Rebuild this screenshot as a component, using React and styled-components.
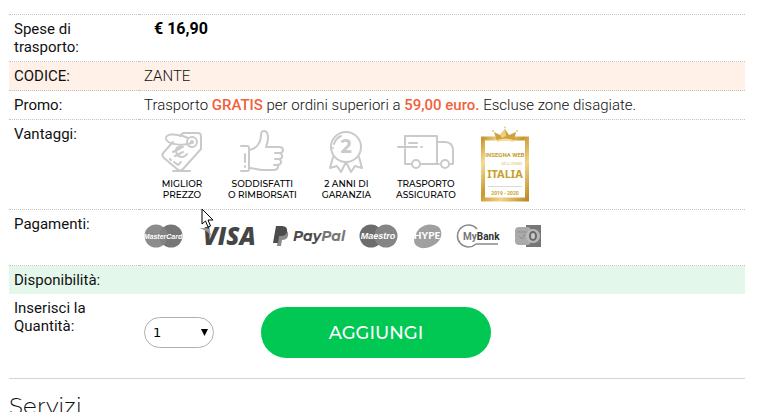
import React from 'react'
import styled, { createGlobalStyle } from 'styled-components'

const GlobalStyle = createGlobalStyle`
  :root {
    --Text-primary: #111;
    --Orange: #f4603a;
    --Light-orange: #fff0e8;
    --Light-green: #e3f8eb;
    --Green: #00c853;
    --Dotted: #c4c4c4;
    --Icon: #cacaca;
  }
  * {
    box-sizing: border-box;
  }
  html {
    overflow: hidden;
  }
  body {
    margin: 0;
    background: #fff;
    color: var(--Text-primary);
    font-family: Roboto, sans-serif;
    font-size: 15px;
    line-height: 18px;
  }
`
const Page = styled.main`
  position: relative;
  padding: 14px 18px 0 9px;
`
const Details = styled.table`
  width: 100%;
  border-collapse: collapse;
  border-spacing: 0;
`
const Row = styled.tr`
  background: ${({ tone }) => tone || 'transparent'};
`
const Label = styled.th`
  width: 130px;
  padding: 5px;
  border-top: ${({ plain }) => (plain ? '0' : '1px dotted var(--Dotted)')};
  font-weight: 400;
  text-align: left;
  vertical-align: top;
`
const Value = styled.td`
  padding: 5px;
  border-top: ${({ plain }) => (plain ? '0' : '1px dotted var(--Dotted)')};
  font-weight: 300;
  vertical-align: top;
`
const Price = styled.strong`
  padding-left: 10px;
  color: #000;
  font-size: 16px;
  font-weight: 700;
`
const Highlight = styled.strong`
  color: var(--Orange);
  font-weight: 500;
`
const Benefits = styled.ul`
  display: flex;
  align-items: flex-start;
  gap: 25px;
  margin: 0;
  padding: 1px 0 2px 17px;
  list-style: none;
`
const Benefit = styled.li`
  display: flex;
  flex-direction: column;
  align-items: center;
  gap: 4px;
  padding-top: 4px;
  color: #000;
  font-family: Montserrat, Inter, sans-serif;
  font-size: 9px;
  font-weight: 500;
  line-height: 11px;
  text-align: center;
  white-space: nowrap;
  svg {
    display: block;
    fill: none;
    stroke: var(--Icon);
    stroke-width: 2;
    stroke-linecap: round;
    stroke-linejoin: round;
  }
`
const Award = styled.li`
  svg {
    display: block;
  }
`
const Payments = styled.div`
  display: flex;
  align-items: center;
  gap: 15px;
  padding: 8px 0 11px;
  svg {
    display: block;
    overflow: visible;
  }
`
const CartForm = styled.form`
  display: flex;
  align-items: center;
  gap: 47px;
  padding: 8px 0 15px;
`
const SelectBox = styled.div`
  position: relative;
  svg {
    position: absolute;
    top: 12px;
    right: 6px;
    pointer-events: none;
  }
`
const Select = styled.select`
  display: block;
  width: 70px;
  height: 31px;
  padding: 0 8px;
  border: 1px solid #b5aeae;
  border-radius: 16px;
  background: #fff;
  color: #000;
  font-family: 'DejaVu Sans', sans-serif;
  font-size: 13px;
  appearance: none;
`
const AddButton = styled.button`
  width: 230px;
  height: 51px;
  border: 0;
  border-radius: 26px;
  background: var(--Green);
  color: #fff;
  font-family: Montserrat, Inter, sans-serif;
  font-size: 18px;
  font-weight: 500;
  cursor: pointer;
`
const Services = styled.section`
  border-top: 1px solid #d4d4d4;
  padding-top: 13px;
`
const Title = styled.h2`
  margin: 0;
  font-family: Montserrat, Inter, sans-serif;
  font-size: 23px;
  font-weight: 300;
  line-height: 28px;
`
const Pointer = styled.svg`
  position: absolute;
  top: 208px;
  left: 201px;
`

const TagIcon = () => (
  <svg width="42" height="44" viewBox="0 0 42 44" aria-hidden="true">
    <path d="M19 6 L22 3 L37 3 Q40 3 40 6 L40 19 L22 39 Q19 42 16 39 L3 28 Q0 25 3 22 L12 12" />
    <path d="M12 41 H29" />
    <circle cx="31" cy="12" r="5" />
    <circle cx="31" cy="12" r="1" />
    <path d="M31 13 C22 16 7 15 5 9 C4 3 15 4 22 6 L27 8" />
    <path d="M22 17 C17 15 13 19 16 24 C18 28 23 28 26 24 M12 22 L20 18 M14 26 L22 22" />
    <path d="M9 29 L10 30 M13 32 L17 35 L20 32" />
  </svg>
)

const ThumbIcon = () => (
  <svg width="44" height="44" viewBox="0 0 44 44" aria-hidden="true">
    <path d="M1 16 H7 Q9 16 9 18 V39 Q9 41 7 41 H1" />
    <path d="M5 24 V32 M5 36 V37" />
    <path d="M9 20 C17 19 21 12 21 5 Q21 1 24 1 Q28 1 28 8 C28 12 27 14 26 17 H39 Q43 17 43 20 Q43 23 39 23 H35 M39 23 Q43 24 42 27 Q42 29 38 29 H35 M39 29 Q42 31 41 33 Q40 35 37 35 H34 M37 35 Q39 37 37 39 Q36 40 33 40 H23 C17 40 15 38 9 38" />
  </svg>
)

const MedalIcon = () => (
  <svg width="36" height="44" viewBox="0 0 36 44" aria-hidden="true">
    <circle cx="18" cy="17" r="15" />
    <path d="M6 14 Q8 8 13 6 M5 18 V18" />
    <path d="M5 27 L2 38 L9 36 L13 42 L18 32 L23 42 L27 36 L34 38 L31 27" />
    <text x="18" y="23" textAnchor="middle" fontFamily="Montserrat, Lato, sans-serif" fontSize="19" fontWeight="700" fill="#cacaca" stroke="none">2</text>
  </svg>
)

const TruckIcon = () => (
  <svg width="58" height="44" viewBox="0 0 58 44" aria-hidden="true">
    <path d="M8 15 V6 H40 V34 H24 M14 34 H8 V19" />
    <path d="M40 12 H48 Q56 12 56 21 V34 H53 M42 34 H40" />
    <circle cx="19" cy="34" r="4" />
    <circle cx="48" cy="34" r="4" />
    <path d="M12 13 H20 M1 17 H20 M24 17 H25" />
  </svg>
)

const AwardBadge = () => (
  <svg width="48" height="76" viewBox="0 0 48 76" role="img" aria-label="Insegna Web dell'anno Italia">
    <defs>
      <linearGradient id="gold" x1="0" y1="0" x2="1" y2="1">
        <stop offset="0" stopColor="#c99a2e" />
        <stop offset="0.2" stopColor="#f3dd9a" />
        <stop offset="0.45" stopColor="#c8982f" />
        <stop offset="0.7" stopColor="#f0d488" />
        <stop offset="1" stopColor="#bd8c28" />
      </linearGradient>
    </defs>
    <rect x="2" y="12.500" width="44" height="61" fill="#fff" stroke="url(#gold)" strokeWidth="4" />
    <path d="M16 15 L13 6 L19 9 L24 3 L28 9 L35 6 L33 15 Q24 12 16 15 Z" fill="#d0a23a" />
    <path d="M19 9 L24 3 L25 10 L21 12 Z" fill="#ecd082" />
    <path d="M16 14 Q24 11 33 14 L32 16 Q24 13 16 16 Z" fill="#f1dc9c" />
    <circle cx="24" cy="1.500" r="1" fill="#e8cd7c" />
    <circle cx="12" cy="5" r="1" fill="#e8cd7c" />
    <circle cx="36" cy="5" r="1" fill="#e8cd7c" />
    <g fontFamily="'Noto Sans', sans-serif" fill="#c99f2c">
      <text x="24" y="31" textAnchor="middle" fontFamily="Roboto, sans-serif" fontSize="6" fontWeight="700">INSEGNA WEB</text>
      <text x="41" y="39" textAnchor="end" fontFamily="Roboto, sans-serif" fontSize="4">DELL’ANNO</text>
      <text x="24" y="52" textAnchor="middle" fontSize="11" fontWeight="700">ITALIA</text>
      <text x="24" y="69" textAnchor="middle" fontFamily="Roboto, sans-serif" fontSize="5" fontWeight="700">2019 - 2020</text>
    </g>
    <path d="M7 60.500 H41" stroke="#dedad0" />
  </svg>
)

const CircleCard = ({ name, size, left, right }) => (
  <svg width="39" height="24" viewBox="0 0 39 24" role="img" aria-label={name}>
    <circle cx="12" cy="12" r="11.500" fill={left} />
    <circle cx="27" cy="12" r="11.500" fill={right} />
    <path d="M19.500 3 A12 12 0 0 1 19.500 21 A12 12 0 0 1 19.500 3 Z" fill="#838383" />
    <text x="19" y="15" textAnchor="middle" fontFamily="'Liberation Sans', sans-serif" fontSize={size} fontWeight="700" fontStyle="italic" fill="#fff">{name}</text>
  </svg>
)

const VisaLogo = () => (
  <svg width="60" height="26" viewBox="0 0 60 26" role="img" aria-label="VISA">
    <text x="5" y="22" fontFamily="'Open Sans', sans-serif" fontSize="24" fontWeight="800" fontStyle="italic" fill="#454545">VISA</text>
    <path d="M1 5 H8 Q11 5 12 8 L13 13 Q9 7 1 5 Z" fill="#999" />
  </svg>
)

const PayPalLogo = () => (
  <svg width="71" height="24" viewBox="0 0 71 24" role="img" aria-label="PayPal">
    <path d="M6 6 H12 Q16 7 15 12 Q14 16 9 16 L8 22 H4 Z" fill="#8b8b8b" />
    <path d="M3 2 H9 Q15 2 14 8 Q13 12 8 12 H6 L5 19 H0 Z" fill="#4c4c4c" />
    <text x="20" y="17" fontFamily="Montserrat, Lato, sans-serif" fontSize="14" fontWeight="700" fontStyle="italic" fill="#4c4c4c">Pay<tspan fill="#777">Pal</tspan></text>
  </svg>
)

const HypeLogo = () => (
  <svg width="29" height="26" viewBox="0 0 29 26" role="img" aria-label="HYPE">
    <path d="M2 13 C5 4 13 0 21 2 C28 3 30 10 27 16 C24 22 15 26 8 25 C1 23 0 18 2 13 Z" fill="#a0a0a0" />
    <text x="14" y="16" textAnchor="middle" fontFamily="Lato, sans-serif" fontSize="10" fontWeight="900" fill="#fff">HYPE</text>
  </svg>
)

const MyBankLogo = () => (
  <svg width="43" height="26" viewBox="0 0 43 26" role="img" aria-label="MyBank">
    <path d="M20 6 A11 11 0 1 0 19 21 H41" fill="none" stroke="#8a8a8a" strokeWidth="1.500" />
    <text x="6" y="17" fontFamily="Roboto, sans-serif" fontSize="10" fontWeight="700" fill="#777">My<tspan fill="#333">Bank</tspan></text>
  </svg>
)

const CardsLogo = () => (
  <svg width="27" height="24" viewBox="0 0 27 24" aria-hidden="true">
    <rect x="11" y="1" width="15" height="22" fill="#777" />
    <rect x="0" y="3" width="16" height="18" rx="4" fill="#aaa" />
    <circle cx="18" cy="12" r="7" fill="#b9b9b9" />
    <ellipse cx="18" cy="12" rx="4" ry="5" fill="#686868" />
    <ellipse cx="18" cy="12" rx="2" ry="3" fill="#c9c9c9" />
    <path d="M2 8 H12 M4 12 L7 15 L10 10" fill="none" stroke="#8c8c8c" />
  </svg>
)

const App = () => {

  return (
    <Page>
      <GlobalStyle />
      <Details>
        <tbody>
          <Row>
            <Label scope="row">Spese di trasporto:</Label>
            <Value><Price>€ 16,90</Price></Value>
          </Row>
          <Row tone="var(--Light-orange)">
            <Label scope="row">CODICE:</Label>
            <Value>ZANTE</Value>
          </Row>
          <Row>
            <Label scope="row">Promo:</Label>
            <Value>
              Trasporto <Highlight>GRATIS</Highlight> per ordini superiori a <Highlight>59,00 euro.</Highlight> Escluse zone disagiate.
            </Value>
          </Row>
          <Row>
            <Label scope="row">Vantaggi:</Label>
            <Value>
              <Benefits>
                <Benefit><TagIcon /><span>MIGLIOR<br />PREZZO</span></Benefit>
                <Benefit><ThumbIcon /><span>SODDISFATTI<br />O RIMBORSATI</span></Benefit>
                <Benefit><MedalIcon /><span>2 ANNI DI<br />GARANZIA</span></Benefit>
                <Benefit><TruckIcon /><span>TRASPORTO<br />ASSICURATO</span></Benefit>
                <Award><AwardBadge /></Award>
              </Benefits>
            </Value>
          </Row>
          <Row>
            <Label scope="row">Pagamenti:</Label>
            <Value>
              <Payments>
                <CircleCard name="MasterCard" size="7" left="#8c8c8c" right="#767676" />
                <VisaLogo />
                <PayPalLogo />
                <CircleCard name="Maestro" size="9" left="#6c6c6c" right="#858585" />
                <HypeLogo />
                <MyBankLogo />
                <CardsLogo />
              </Payments>
            </Value>
          </Row>
          <Row tone="var(--Light-green)">
            <Label scope="row">Disponibilità:</Label>
            <Value />
          </Row>
          <Row>
            <Label scope="row" plain><label htmlFor="quantity">Inserisci la Quantità:</label></Label>
            <Value plain>
              <CartForm onSubmit={(e) => e.preventDefault()}>
                <SelectBox>
                  <Select id="quantity" defaultValue="1">
                    <option>1</option>
                    <option>2</option>
                    <option>3</option>
                    <option>4</option>
                    <option>5</option>
                  </Select>
                  <svg width="7" height="7" viewBox="0 0 7 7" aria-hidden="true"><path d="M0 0 H7 L3.500 7 Z" /></svg>
                </SelectBox>
                <AddButton type="submit">AGGIUNGI</AddButton>
              </CartForm>
            </Value>
          </Row>
        </tbody>
      </Details>
      <Services>
        <Title>Servizi</Title>
      </Services>
      <Pointer width="13" height="20" viewBox="0 0 13 20" aria-hidden="true">
        <path d="M1 1 V16 L4.500 13 L7 19 L9.500 18 L7 12 H12 Z" fill="#fff" stroke="#000" />
      </Pointer>
    </Page>
  )
}

export default App
